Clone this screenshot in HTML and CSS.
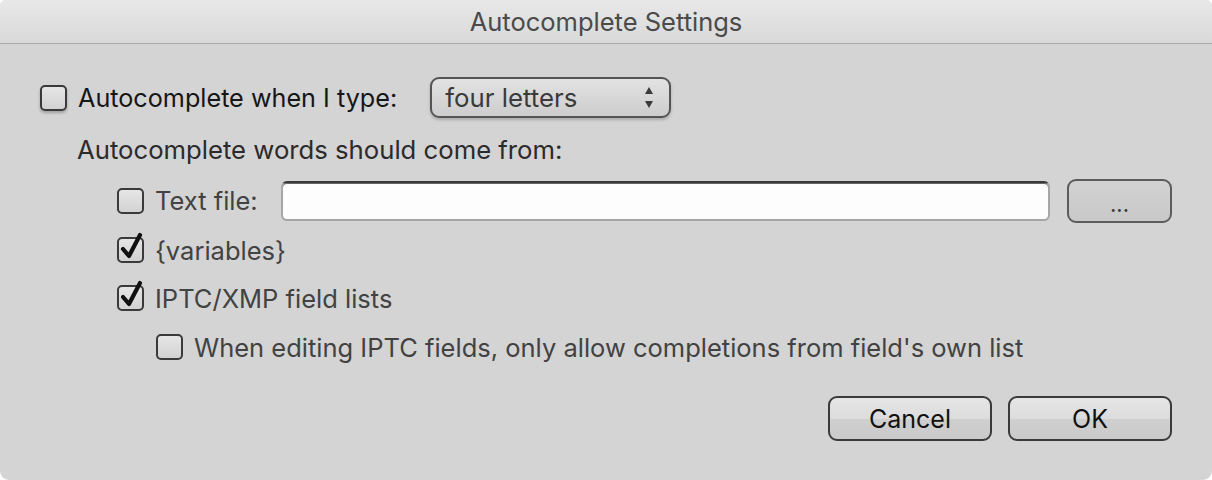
FILE: index.html
```html
<!DOCTYPE html>
<html>
<head>
<meta charset="utf-8">
<link rel="stylesheet" href="styles.css">
</head>
<body>
<div class="window">
  <div class="titlebar">Autocomplete Settings</div>
  <div class="content">
    <div class="row row-main">
      <span class="cb cb-focus"></span>
      <span class="label-main">Autocomplete when I type:</span>
      <div class="popup">
        <span class="popup-text">four letters</span>
        <span class="arrows">
          <svg width="10" height="24" viewBox="0 0 10 24"><path d="M1 8 L5 1 L9 8 Z" fill="#3a3a3a"/><path d="M1 15 L9 15 L5 22 Z" fill="#3a3a3a"/></svg>
        </span>
      </div>
    </div>
    <div class="row row-sub">
      <span class="label-sub">Autocomplete words should come from:</span>
    </div>
    <div class="row row-file">
      <span class="cb"></span>
      <span class="label-item label-file">Text file:</span>
      <div class="field"></div>
      <div class="btn btn-browse">...</div>
    </div>
    <div class="row row-item row-vars">
      <span class="cb cb-checked">
        <svg class="check" width="28" height="30" viewBox="0 0 28 30"><path d="M6 17 L12 24 L23 3" fill="none" stroke="#111" stroke-width="4.2" stroke-linecap="round" stroke-linejoin="round"/></svg>
      </span>
      <span class="label-item">{variables}</span>
    </div>
    <div class="row row-item row-iptc">
      <span class="cb cb-checked">
        <svg class="check" width="28" height="30" viewBox="0 0 28 30"><path d="M6 17 L12 24 L23 3" fill="none" stroke="#111" stroke-width="4.2" stroke-linecap="round" stroke-linejoin="round"/></svg>
      </span>
      <span class="label-item">IPTC/XMP field lists</span>
    </div>
    <div class="row row-item row-only">
      <span class="cb"></span>
      <span class="label-item">When editing IPTC fields, only allow completions from field's own list</span>
    </div>
    <div class="buttons">
      <div class="btn btn-action">Cancel</div>
      <div class="btn btn-action">OK</div>
    </div>
  </div>
</div>
</body>
</html>
```
FILE: styles.css
```css
* { box-sizing: border-box; }
html, body { margin: 0; padding: 0; background: #ffffff; }
body { width: 1212px; height: 480px; overflow: hidden; font-family: "Inter", "Roboto", "Liberation Sans", sans-serif; }

.window {
  width: 1212px;
  height: 480px;
  background: #d4d4d4;
  border-radius: 6px 6px 9px 9px;
  overflow: hidden;
}

.titlebar {
  height: 44px;
  background: linear-gradient(#e8e8e8, #d9d9d9);
  border-bottom: 1px solid #a8a8a8;
  text-align: center;
  font-size: 25.5px;
  line-height: 43px;
  color: #4a4a4a;
}

.content {
  padding: 33px 40px 0 40px;
}

.row {
  display: flex;
  align-items: center;
}

.row-main { height: 41px; }
.row-sub { height: 30px; margin-top: 16px; padding-left: 37px; }
.row-file { height: 43px; margin-top: 15px; padding-left: 77px; }
.row-vars { height: 30px; margin-top: 13px; padding-left: 77px; }
.row-iptc { height: 30px; margin-top: 18px; padding-left: 77px; }
.row-only { height: 30px; margin-top: 19px; padding-left: 116px; }

.cb {
  position: relative;
  flex: none;
  width: 27px;
  height: 26px;
  border: 2px solid #3a3a3a;
  border-radius: 5px;
  background: linear-gradient(#e6e6e6, #d2d2d2);
}
.cb-focus { box-shadow: 0 2px 3px rgba(0,0,0,0.25); }
.check {
  position: absolute;
  left: -2px;
  top: -7px;
}

.label-main {
  margin-left: 11px;
  font-size: 25.2px;
  color: #161616;
}

.popup {
  margin-left: 33px;
  width: 241px;
  height: 41px;
  border: 2px solid #545454;
  border-radius: 9px;
  background: linear-gradient(#e2e2e2, #cdcdcd);
  box-shadow: 0 2px 3px rgba(0,0,0,0.2);
  display: flex;
  align-items: center;
  justify-content: space-between;
  padding: 0 15px 0 13px;
}
.popup-text { font-size: 25.8px; color: #3a3a3a; }
.arrows { display: flex; align-items: center; }

.label-sub { font-size: 25.7px; color: #2b2b2b; }

.label-item {
  margin-left: 11px;
  font-size: 25.5px;
  color: #424242;
}
.label-file { width: 126px; }

.field {
  width: 769px;
  height: 40px;
  background: #fdfdfd;
  border: 2px solid #a6a6a6;
  border-top-color: #3a3a3a;
  border-radius: 6px;
  box-shadow: inset 0 1px 0 #666;
}

.btn {
  display: flex;
  align-items: center;
  justify-content: center;
  border: 2px solid #4a4a4a;
  border-radius: 9px;
  background: linear-gradient(#e6e6e6 0%, #dcdcdc 50%, #cfcfcf 52%, #cacaca 100%);
}

.btn-browse {
  margin-left: 17px;
  width: 105px;
  height: 44px;
  font-size: 22px;
  color: #3a3a3a;
  background: linear-gradient(#d2d2d2, #c8c8c8);
  border-color: #5c5c5c;
  padding-top: 6px;
}

.buttons {
  display: flex;
  justify-content: flex-end;
  gap: 16px;
  margin-top: 34px;
}
.btn-action {
  width: 164px;
  height: 45px;
  font-size: 25px;
  color: #111;
  border-color: #3a3a3a;
}
```
